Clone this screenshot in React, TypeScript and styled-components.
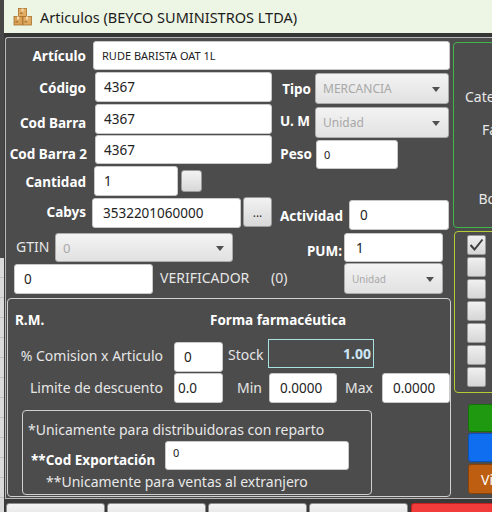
import React from "react";
import styled, { createGlobalStyle } from "styled-components";

const GlobalStyle = createGlobalStyle`
  html, body { margin: 0; padding: 0; }
  body {
    width: 492px; height: 512px; overflow: hidden;
    background: #3c3c3c;
    font-family: "Noto Sans", "Open Sans", sans-serif;
  }
  * { box-sizing: border-box; }
`;

const Page = styled.div`
  display: flex;
  width: 492px;
  height: 512px;
  overflow: hidden;
`;

const BackStrip = styled.div`
  width: 4px;
  flex: none;
  display: flex;
  flex-direction: column;
`;
const BackDark = styled.div`
  height: 258px;
  background: #474747;
`;
const BackGrid = styled.div`
  flex: 1;
  background: repeating-linear-gradient(to bottom, #dadada 0 19px, #c2c2c2 19px 20px);
`;

const Window = styled.div`
  flex: 1;
  min-width: 0;
  display: flex;
  flex-direction: column;
  overflow: hidden;
`;

const TitleBar = styled.div`
  height: 33px;
  flex: none;
  background: #edf5e5;
  display: flex;
  align-items: center;
  padding-left: 9px;
  gap: 7px;
  color: #1b1b1b;
  font-size: 14.5px;
  white-space: nowrap;
`;

const TitleGap = styled.div`
  height: 4px;
  flex: none;
  background: #363636;
`;

const Body = styled.div`
  display: flex;
  height: 462px;
  flex: none;
  margin-left: 1px;
  border-top: 1px solid #b8b8b8;
  border-left: 1px solid #b8b8b8;
  border-bottom: 1px solid #b8b8b8;
  border-top-left-radius: 3px;
  background: #4c4c4c;
  overflow: hidden;
`;

const FormCol = styled.div`
  width: 446px;
  flex: none;
  display: flex;
  flex-direction: column;
`;

const Row = styled.div<{ $h: number; $mt: number }>`
  display: flex;
  align-items: flex-start;
  height: ${(p) => p.$h}px;
  margin-top: ${(p) => p.$mt}px;
  flex: none;
`;

type LabelProps = { $w?: number; $ml?: number; $dy?: number; $pr?: number; $align?: string };

const BoldLabel = styled.div<LabelProps>`
  flex: none;
  width: ${(p) => (p.$w ? `${p.$w}px` : "auto")};
  margin-left: ${(p) => p.$ml ?? 0}px;
  margin-top: ${(p) => p.$dy ?? 0}px;
  padding-right: ${(p) => p.$pr ?? 2}px;
  height: 20px;
  line-height: 20px;
  text-align: ${(p) => p.$align ?? "right"};
  color: #ffffff;
  font-weight: 700;
  font-size: 13.5px;
  white-space: nowrap;
`;

const PlainLabel = styled.div<LabelProps>`
  flex: none;
  width: ${(p) => (p.$w ? `${p.$w}px` : "auto")};
  margin-left: ${(p) => p.$ml ?? 0}px;
  margin-top: ${(p) => p.$dy ?? 0}px;
  padding-right: ${(p) => p.$pr ?? 0}px;
  height: 20px;
  line-height: 20px;
  text-align: ${(p) => p.$align ?? "left"};
  color: #e6e6e6;
  font-size: 14px;
  white-space: nowrap;
`;

type FieldProps = { $w: number; $h: number; $ml?: number; $dy?: number; $fs?: number; $pl?: number; $top?: boolean };

const Field = styled.div<FieldProps>`
  flex: none;
  width: ${(p) => p.$w}px;
  height: ${(p) => p.$h}px;
  margin-left: ${(p) => p.$ml ?? 0}px;
  margin-top: ${(p) => p.$dy ?? 0}px;
  padding-left: ${(p) => p.$pl ?? 9}px;
  padding-top: ${(p) => (p.$top ? 3 : 0)}px;
  display: flex;
  align-items: ${(p) => (p.$top ? "flex-start" : "center")};
  background: #ffffff;
  border: 1px solid #c9c9c9;
  border-radius: 3px;
  color: #222222;
  font-size: ${(p) => p.$fs ?? 13.5}px;
  white-space: nowrap;
  overflow: hidden;
`;

const Select = styled.div<FieldProps>`
  flex: none;
  position: relative;
  width: ${(p) => p.$w}px;
  height: ${(p) => p.$h}px;
  margin-left: ${(p) => p.$ml ?? 0}px;
  margin-top: ${(p) => p.$dy ?? 0}px;
  padding-left: ${(p) => p.$pl ?? 7}px;
  display: flex;
  align-items: center;
  background: linear-gradient(to bottom, #f3f3f3, #e1e1e1);
  border: 1px solid #acacac;
  border-radius: 3px;
  color: #a8a8a8;
  font-size: ${(p) => p.$fs ?? 12}px;
  white-space: nowrap;
`;

const Caret = styled.span`
  position: absolute;
  right: 8px;
  top: 50%;
  margin-top: -2px;
  width: 0;
  height: 0;
  border-left: 4.5px solid transparent;
  border-right: 4.5px solid transparent;
  border-top: 5px solid #505050;
`;

const SmallBox = styled.div<{ $w: number; $h: number; $ml?: number; $dy?: number }>`
  flex: none;
  width: ${(p) => p.$w}px;
  height: ${(p) => p.$h}px;
  margin-left: ${(p) => p.$ml ?? 0}px;
  margin-top: ${(p) => p.$dy ?? 0}px;
  background: linear-gradient(to bottom, #f2f2f2, #d8d8d8);
  border: 1px solid #9b9b9b;
  border-radius: 3px;
  display: flex;
  align-items: center;
  justify-content: center;
  color: #333;
  font-size: 12px;
`;

const RMBox = styled.div`
  margin-top: 4px;
  margin-left: 1px;
  width: 444px;
  height: 199px;
  flex: none;
  border: 1px solid #d0d0d0;
  border-radius: 4px;
  display: flex;
  flex-direction: column;
`;

const RMHeader = styled.div`
  display: flex;
  margin-top: 11px;
  height: 20px;
  line-height: 20px;
  color: #fff;
  font-weight: 700;
  font-size: 13.5px;
`;

const HeaderCell = styled.div<{ $w?: number; $pl?: number }>`
  width: ${(p) => (p.$w ? `${p.$w}px` : "auto")};
  padding-left: ${(p) => p.$pl ?? 0}px;
  white-space: nowrap;
`;

const StockBox = styled.div`
  flex: none;
  width: 106px;
  height: 29px;
  border: 1px solid #a9e2e2;
  display: flex;
  align-items: center;
  justify-content: flex-end;
  padding-right: 2px;
  color: #cde6f6;
  font-weight: 700;
  font-size: 14px;
`;

const SubBox = styled.div`
  margin-top: 7px;
  margin-left: 14px;
  width: 350px;
  height: 85px;
  flex: none;
  border: 1px solid #cfcfcf;
  border-radius: 4px;
  display: flex;
  flex-direction: column;
`;

const Note = styled.div<{ $mt: number; $pl: number }>`
  margin-top: ${(p) => p.$mt}px;
  padding-left: ${(p) => p.$pl}px;
  height: 20px;
  line-height: 20px;
  color: #e8e8e8;
  font-size: 14px;
  white-space: nowrap;
`;

const SideCol = styled.div`
  width: 300px;
  flex: none;
  display: flex;
  flex-direction: column;
`;

const GreenBox = styled.div`
  margin-top: 4px;
  margin-left: 1px;
  width: 280px;
  height: 186px;
  flex: none;
  border: 1px solid #41b649;
  border-radius: 4px;
  display: flex;
  flex-direction: column;
`;

const SideLabel = styled.div<{ $mt: number }>`
  margin-top: ${(p) => p.$mt}px;
  width: 75px;
  text-align: right;
  height: 20px;
  line-height: 20px;
  color: #e8e8e8;
  font-size: 14px;
  white-space: nowrap;
`;

const YellowBox = styled.div`
  margin-top: 3px;
  margin-left: 2px;
  width: 280px;
  height: 162px;
  flex: none;
  border: 1px solid #b3cd35;
  border-radius: 4px;
  display: flex;
  flex-direction: column;
  gap: 2px;
  padding-top: 3px;
  padding-left: 12px;
`;

const SideCheck = styled.div`
  width: 19px;
  height: 20px;
  background: linear-gradient(to bottom, #f0f0f0, #d6d6d6);
  border: 1px solid #9a9a9a;
  border-radius: 2px;
  display: flex;
  align-items: center;
  justify-content: center;
`;

const ActionStack = styled.div`
  margin-top: 11px;
  margin-left: 16px;
  display: flex;
  flex-direction: column;
`;

const ActionButton = styled.div<{ $bg: string; $bd: string; $h: number; $mt: number }>`
  width: 200px;
  height: ${(p) => p.$h}px;
  margin-top: ${(p) => p.$mt}px;
  background: ${(p) => p.$bg};
  border: 1px solid ${(p) => p.$bd};
  border-radius: 3px;
  color: #fff;
  font-size: 14px;
  display: flex;
  align-items: center;
  padding-left: 12px;
  white-space: nowrap;
`;

const BottomBar = styled.div`
  flex: 1;
  display: flex;
  gap: 2px;
  padding-top: 4px;
  padding-left: 2px;
  background: #3a3a3a;
`;

const BottomButton = styled.div<{ $red?: boolean }>`
  flex: none;
  width: ${(p) => (p.$red ? 120 : 99)}px;
  margin-left: ${(p) => (p.$red ? 1 : 0)}px;
  height: 20px;
  background: ${(p) => (p.$red ? "#f23b3b" : "linear-gradient(to bottom, #f4f4f4, #dedede)")};
  border: 1px solid ${(p) => (p.$red ? "#c42020" : "#8d8d8d")};
  border-radius: 3px;
`;

const BoxesIcon = () => (
  <svg width="20" height="20" viewBox="0 0 20 20">
    <g stroke="#a8702c" strokeWidth="0.8">
      <rect x="5.5" y="1.5" width="8" height="8" fill="#e2ad63" />
      <rect x="1" y="9.5" width="8.5" height="8.5" fill="#d9a257" />
      <rect x="10" y="9.5" width="8.5" height="8.5" fill="#e0aa60" />
    </g>
    <rect x="8.5" y="1.5" width="2" height="3" fill="#f4dcb0" />
    <rect x="4" y="9.5" width="2.2" height="3" fill="#f4dcb0" />
    <rect x="13" y="9.5" width="2.2" height="3" fill="#f4dcb0" />
    <rect x="7" y="5.5" width="2.5" height="1.5" fill="#8a5a22" opacity="0.6" />
    <rect x="2.5" y="14" width="2.5" height="1.5" fill="#8a5a22" opacity="0.6" />
    <rect x="11.5" y="14" width="2.5" height="1.5" fill="#8a5a22" opacity="0.6" />
  </svg>
);

const CheckMark = () => (
  <svg width="15" height="14" viewBox="0 0 15 14">
    <polyline points="1.5,7 5.5,11.5 13.5,1.5" fill="none" stroke="#3e3e3e" strokeWidth="2" />
  </svg>
);

export default function App() {
  return (
    <>
      <GlobalStyle />
      <Page>
        <BackStrip>
          <BackDark />
          <BackGrid />
        </BackStrip>
        <Window>
          <TitleBar>
            <BoxesIcon />
            <span>Articulos (BEYCO SUMINISTROS LTDA)</span>
          </TitleBar>
          <TitleGap />
          <Body>
            <FormCol>
              <Row $h={29} $mt={3}>
                <BoldLabel $w={82} $dy={5}>Artículo</BoldLabel>
                <Field $ml={5} $w={357} $h={29} $fs={11} $pl={8}>RUDE BARISTA OAT 1L</Field>
              </Row>
              <Row $h={30} $mt={2}>
                <BoldLabel $w={82} $dy={6}>Código</BoldLabel>
                <Field $ml={7} $w={177} $h={30} $pl={8}>4367</Field>
                <BoldLabel $ml={4} $w={36} $pr={1} $dy={7}>Tipo</BoldLabel>
                <Select $ml={3} $w={134} $h={31} $dy={1}>MERCANCIA<Caret /></Select>
              </Row>
              <Row $h={30} $mt={2}>
                <BoldLabel $w={82} $dy={9}>Cod Barra</BoldLabel>
                <Field $ml={7} $w={177} $h={30} $pl={8}>4367</Field>
                <BoldLabel $ml={4} $w={36} $pr={2} $dy={7}>U. M</BoldLabel>
                <Select $ml={3} $w={134} $h={31} $dy={3}>Unidad<Caret /></Select>
              </Row>
              <Row $h={29} $mt={1}>
                <BoldLabel $w={82} $pr={1} $dy={9}>Cod Barra 2</BoldLabel>
                <Field $ml={7} $w={177} $h={29} $pl={8}>4367</Field>
                <BoldLabel $ml={4} $w={37} $pr={1} $dy={9}>Peso</BoldLabel>
                <Field $ml={3} $w={82} $h={29} $dy={5} $fs={11} $pl={7}>0</Field>
              </Row>
              <Row $h={30} $mt={2}>
                <BoldLabel $w={82} $dy={6}>Cantidad</BoldLabel>
                <Field $ml={6} $w={84} $h={30} $pl={9}>1</Field>
                <SmallBox $ml={3} $w={21} $h={22} $dy={4} />
              </Row>
              <Row $h={30} $mt={2}>
                <BoldLabel $w={82} $dy={4}>Cabys</BoldLabel>
                <Field $ml={4} $w={149} $h={30} $pl={10}>3532201060000</Field>
                <SmallBox $ml={2} $w={29} $h={30} $dy={-1}>...</SmallBox>
                <BoldLabel $ml={4} $w={68} $pr={1} $dy={8}>Actividad</BoldLabel>
                <Field $ml={5} $w={100} $h={30} $dy={2} $pl={10}>0</Field>
              </Row>
              <Row $h={29} $mt={5}>
                <PlainLabel $ml={10} $w={36} $dy={4}>GTIN</PlainLabel>
                <Select $ml={3} $w={178} $h={29} $fs={13}>0<Caret /></Select>
                <BoldLabel $w={109} $pr={0} $dy={8}>PUM:</BoldLabel>
                <Field $ml={2} $w={99} $h={29} $pl={11}>1</Field>
              </Row>
              <Row $h={30} $mt={2}>
                <Field $ml={8} $w={139} $h={30} $pl={9}>0</Field>
                <PlainLabel $ml={7} $w={111} $dy={4}>VERIFICADOR</PlainLabel>
                <PlainLabel $w={73} $dy={4}>(0)</PlainLabel>
                <Select $w={99} $h={31} $dy={-1} $fs={10}>Unidad<Caret /></Select>
              </Row>
              <RMBox>
                <RMHeader>
                  <HeaderCell $w={202} $pl={7}>R.M.</HeaderCell>
                  <HeaderCell>Forma farmacéutica</HeaderCell>
                </RMHeader>
                <Row $h={30} $mt={9}>
                  <PlainLabel $w={157} $pr={2} $align="right" $dy={7}>% Comision x Articulo</PlainLabel>
                  <Field $ml={9} $w={49} $h={30} $dy={3}>0</Field>
                  <PlainLabel $ml={5} $w={40} $dy={6}>Stock</PlainLabel>
                  <StockBox>1.00</StockBox>
                </Row>
                <Row $h={30} $mt={4}>
                  <PlainLabel $w={157} $pr={2} $align="right" $dy={5}>Limite de descuento</PlainLabel>
                  <Field $ml={9} $w={49} $h={30} $pl={3}>0.0</Field>
                  <PlainLabel $ml={14} $w={32} $dy={5}>Min</PlainLabel>
                  <Field $w={68} $h={30} $pl={10}>0.0000</Field>
                  <PlainLabel $ml={8} $w={37} $dy={5}>Max</PlainLabel>
                  <Field $w={68} $h={30} $pl={10}>0.0000</Field>
                </Row>
                <SubBox>
                  <Note $mt={9} $pl={5}>*Unicamente para distribuidoras con reparto</Note>
                  <Row $h={29} $mt={1}>
                    <BoldLabel $ml={8} $w={134} $align="left" $dy={9}>**Cod Exportación</BoldLabel>
                    <Field $w={184} $h={29} $fs={11} $pl={7} $top>0</Field>
                  </Row>
                  <Note $mt={2} $pl={23}>**Unicamente para ventas al extranjero</Note>
                </SubBox>
              </RMBox>
            </FormCol>
            <SideCol>
              <GreenBox>
                <SideLabel $mt={44}>Categoría</SideLabel>
                <SideLabel $mt={13}>Familia</SideLabel>
                <SideLabel $mt={13}>Línea</SideLabel>
                <SideLabel $mt={16}>Bodega</SideLabel>
              </GreenBox>
              <YellowBox>
                <SideCheck><CheckMark /></SideCheck>
                <SideCheck />
                <SideCheck />
                <SideCheck />
                <SideCheck />
                <SideCheck />
                <SideCheck />
              </YellowBox>
              <ActionStack>
                <ActionButton $bg="#1f9a10" $bd="#157008" $h={28} $mt={0} />
                <ActionButton $bg="#0f6ef0" $bd="#0a52b8" $h={29} $mt={1} />
                <ActionButton $bg="#bd5e10" $bd="#8a4209" $h={30} $mt={2}>Vincular</ActionButton>
              </ActionStack>
            </SideCol>
          </Body>
          <BottomBar>
            <BottomButton />
            <BottomButton />
            <BottomButton />
            <BottomButton />
            <BottomButton $red />
          </BottomBar>
        </Window>
      </Page>
    </>
  );
}
